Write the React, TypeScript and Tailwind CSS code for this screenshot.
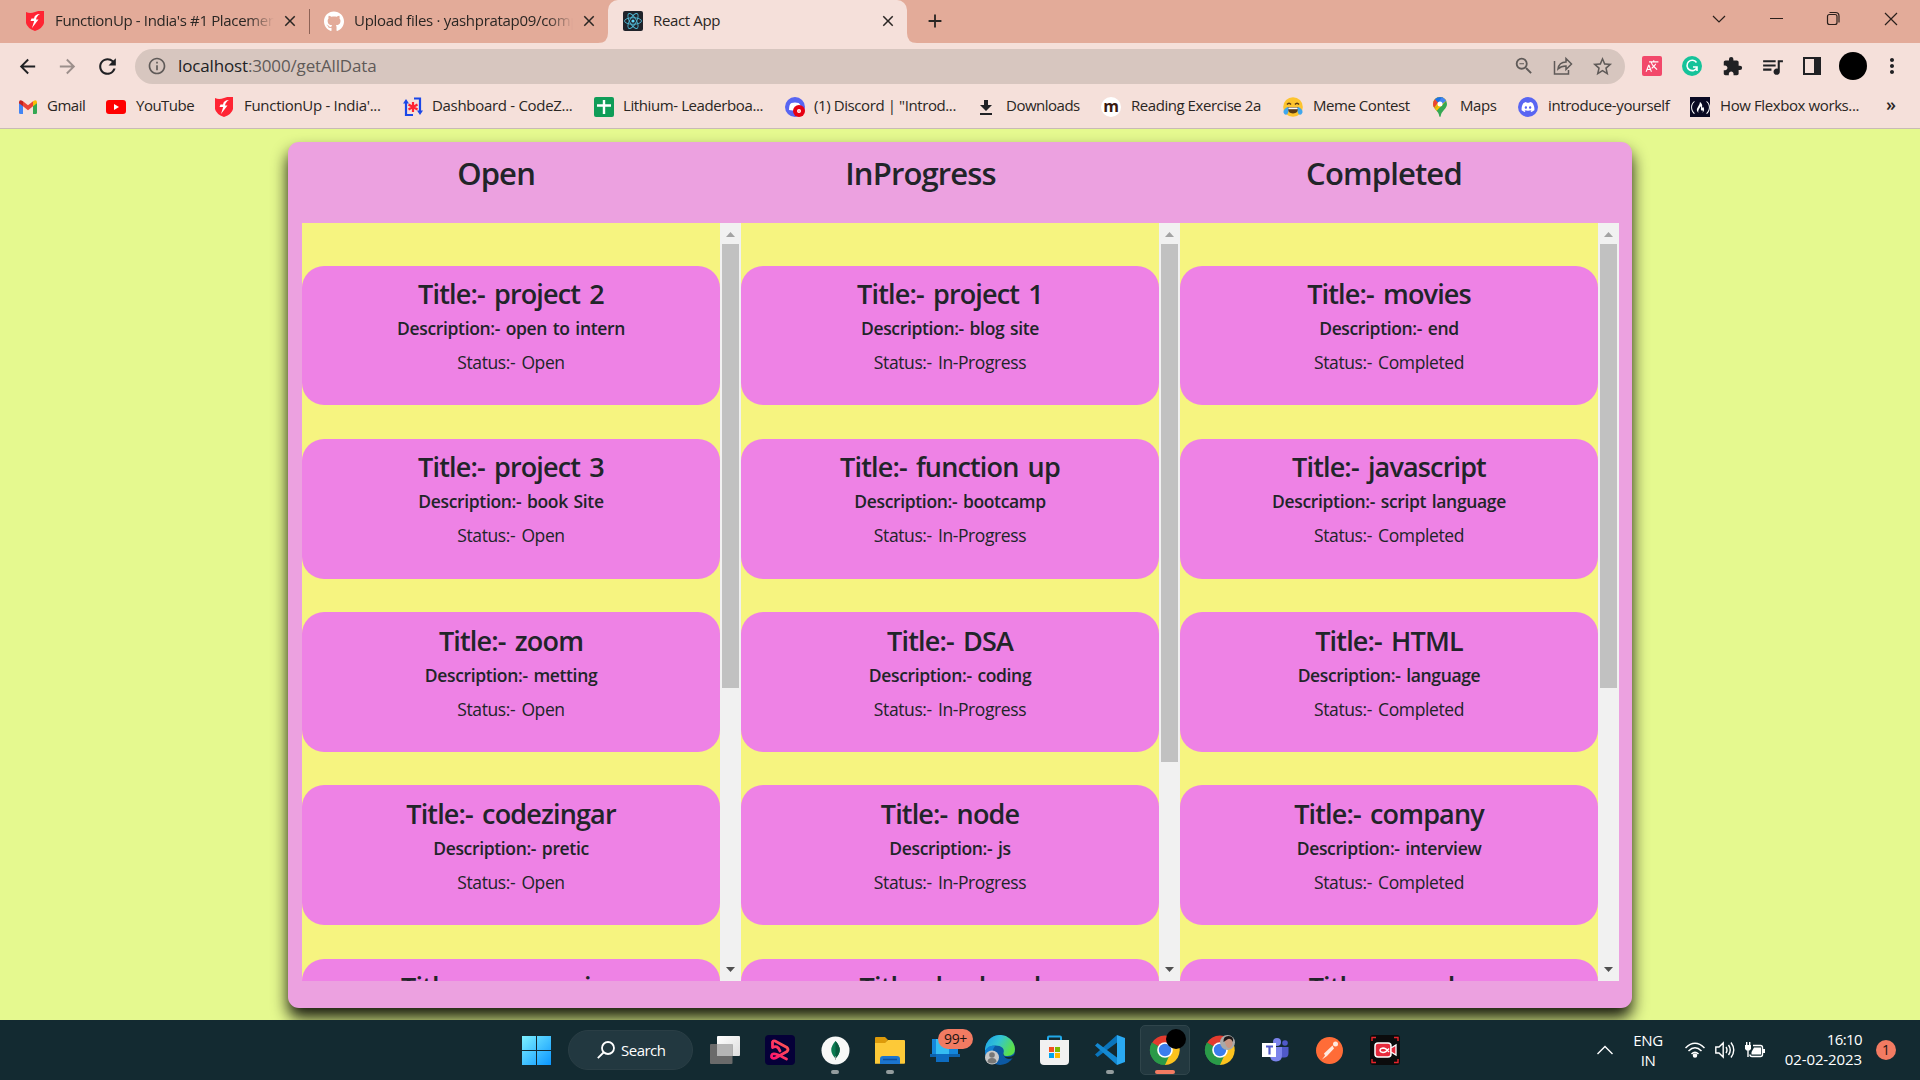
import React from "react";
import { FaGithub, FaDiscord, FaFreeCodeCamp } from "react-icons/fa";
import {
  MdArrowBack,
  MdArrowForward,
  MdRefresh,
  MdInfoOutline,
  MdZoomOut,
  MdStarBorder,
  MdExtension,
  MdQueueMusic,
  MdMoreVert,
  MdClose,
  MdAdd,
  MdTranslate,
} from "react-icons/md";

/* ---------- favicons ---------- */

const Shield = () => (
  <svg width="18" height="20" viewBox="0 0 18 20">
    <path d="M0 1q4 2 9 0q5-2 9-1v12q-1 5-9 8q-8-3-9-8z" fill="#ff2433" />
    <path d="M14 3Q8.500 3 8 7.500H5.500L4.500 10h3.700L6 17l6.500-8.500H10Q10.500 5 14 3z" fill="#fff" />
  </svg>
);
const ReactIcon = () => (
  <svg width="20" height="20" viewBox="0 0 20 20">
    <rect width="20" height="20" rx="2" fill="#20232a" />
    <g fill="none" stroke="#4fb7d3" strokeWidth="0.9">
      <ellipse cx="10" cy="10" rx="8.500" ry="3.300" />
      <ellipse cx="10" cy="10" rx="8.500" ry="3.300" transform="rotate(60 10 10)" />
      <ellipse cx="10" cy="10" rx="8.500" ry="3.300" transform="rotate(120 10 10)" />
    </g>
    <circle cx="10" cy="10" r="1.600" fill="#61dafb" />
  </svg>
);
const Gmail = () => (
  <svg width="18" height="14" viewBox="0 0 18 14">
    <path d="M0 2v10.500Q0 14 1.300 14H4V5z" fill="#4285f4" />
    <path d="M18 2v10.500Q18 14 16.700 14H14V5z" fill="#34a853" />
    <path d="M4 1.300 9 5.200l5-3.900v5L9 10.200 4 6.300z" fill="#ea4335" />
    <path d="M0 2.200Q.3-1.200 4 1.300v5L0 3.300z" fill="#c5221f" />
    <path d="M18 2.200Q17.700-1.200 14 1.300v5l4-3z" fill="#fbbc04" />
  </svg>
);
const YouTube = () => (
  <svg width="20" height="14" viewBox="0 0 20 14">
    <rect width="20" height="14" rx="3" fill="#f00" />
    <path d="M8 4v6l5-3z" fill="#fff" />
  </svg>
);
const CodeZ = () => (
  <svg width="20" height="20" viewBox="0 0 20 20" fill="none">
    <path d="M3 6v12h7M17 14V1.500h-6" stroke="#1a47e8" strokeWidth="2.200" />
    <path d="M0 6.500 3 2l3 4.500zM14 13.500l3 4.500 3-4.500z" fill="#1a47e8" />
    <path d="M10 5v10M5.500 7.500l9 5M14.500 7.500l-9 5" stroke="#ff2433" strokeWidth="2.200" />
  </svg>
);
const Sheets = () => (
  <svg width="20" height="20" viewBox="0 0 20 20">
    <rect width="20" height="20" rx="2" fill="#0f9d58" />
    <path d="M10 3v14M3 8.500h14" stroke="#fff" strokeWidth="2.400" />
  </svg>
);
const DiscordBadge = () => (
  <svg width="20" height="20" viewBox="0 0 20 20">
    <circle cx="10" cy="10" r="10" fill="#5865f2" />
    <path d="M4 13Q4 7 6.500 6q3.500-1 7 0 2 1 2.500 5l-5 3z" fill="#fff" />
    <circle cx="14" cy="14" r="6" fill="#e60012" />
    <circle cx="14" cy="14" r="1.300" fill="none" stroke="#fff" strokeWidth="1.400" />
  </svg>
);
const Download = () => (
  <svg width="12" height="15" viewBox="0 0 12 15" className="ml-[4px]">
    <path d="M4 0h4v5h4l-6 6-6-6h4zM0 13h12v2H0z" fill="#202124" />
  </svg>
);
const LetterM = () => (
  <span className="flex h-5 w-5 items-center justify-center rounded-full bg-white pb-[3px] text-[16px] leading-none font-bold text-[#3a1a10]">
    m
  </span>
);
const Joy = () => (
  <svg width="20" height="20" viewBox="0 0 20 20">
    <circle cx="10" cy="10" r="9.800" fill="#fdc42e" />
    <path d="M4 7.500q2-2.500 4 0M12 7.500q2-2.500 4 0" stroke="#5b3a12" strokeWidth="1.500" fill="none" />
    <path d="M4.500 10h11q0 6.500-5.500 6.500T4.500 10z" fill="#5b3a12" />
    <path d="M5.300 10.500h9.400v1.700H5.300z" fill="#fff" />
    <path d="M5 10q-5 2-4.500 5.500Q2 19 4.500 17 6 15 5 10zM15 10q5 2 4.500 5.500Q18 19 15.500 17 14 15 15 10z" fill="#3fa7ee" />
  </svg>
);
const MapsPin = () => (
  <svg width="14" height="20" viewBox="0 0 14 20" className="ml-[3px]">
    <defs>
      <clipPath id="pin">
        <path d="M7 0a7 7 0 0 1 7 7c0 5-6 7-6.300 12.300q-.7 1.400-1.400 0C6 14 0 12 0 7a7 7 0 0 1 7-7z" />
      </clipPath>
    </defs>
    <g clipPath="url(#pin)">
      <path d="M0 0h14v20H0z" fill="#34a853" />
      <path d="M0 13.500 14 0v3L2.500 15z" fill="#fbbc04" />
      <path d="M0 0h14L12 2.500 1 12 0 13z" fill="#fbbc04" />
      <path d="M0 0h12L5 6.500z" fill="#1a73e8" />
      <path d="M5 6 9 0h5v3L8 8z" fill="#4285f4" />
      <path d="M0 2h1.500L5 5.500 1 11H0z" fill="#ea4335" />
    </g>
    <circle cx="7" cy="7" r="2.500" fill="#fff" />
  </svg>
);
const Discord = () => (
  <span className="flex h-5 w-5 items-center justify-center rounded-full bg-[#5865f2] text-white">
    <FaDiscord size={14} />
  </span>
);
const Fcc = () => (
  <span className="flex h-5 w-5 items-center justify-center bg-[#0a0a23] text-white">
    <FaFreeCodeCamp size={19} />
  </span>
);

/* ---------- browser chrome ---------- */

function Tab({ icon, label, cls, text }: { icon: React.ReactNode; label: string; cls: string; text: string }) {
  return (
    <div className={`flex h-full items-center pb-px ${cls}`}>
      <span className="flex w-5 shrink-0 justify-center">{icon}</span>
      <span className={`ml-[10px] flex-1 overflow-hidden pb-[2px] whitespace-nowrap ${text}`}>{label}</span>
      <MdClose size={18} className="ml-[7px] shrink-0" />
    </div>
  );
}

const bookmarks = [
  { icon: <Gmail />, label: "Gmail", w: "w-[87px]", t: "ml-[10px] tracking-[-0.5px]" },
  { icon: <YouTube />, label: "YouTube", w: "w-[109px]", t: "ml-[10px] tracking-[-0.5px]" },
  { icon: <Shield />, label: "FunctionUp - India'...", w: "w-[188px]", t: "ml-[11px] tracking-[-0.3px]" },
  { icon: <CodeZ />, label: "Dashboard - CodeZ...", w: "w-[191px]", t: "ml-[9px] tracking-[-0.3px]" },
  { icon: <Sheets />, label: "Lithium- Leaderboa...", w: "w-[191px]", t: "ml-[9px] tracking-[-0.4px]" },
  { icon: <DiscordBadge />, label: '(1) Discord | "Introd...', w: "w-[191px]", t: "ml-[9px] tracking-[-0.4px]" },
  { icon: <Download />, label: "Downloads", w: "w-[125px]", t: "ml-[14px] tracking-[-0.5px]" },
  { icon: <LetterM />, label: "Reading Exercise 2a", w: "w-[182px]", t: "ml-[10px] tracking-[-0.45px]" },
  { icon: <Joy />, label: "Meme Contest", w: "w-[147px]", t: "ml-[10px] tracking-[-0.45px]" },
  { icon: <MapsPin />, label: "Maps", w: "w-[88px]", t: "ml-[13px] tracking-[-0.4px]" },
  { icon: <Discord />, label: "introduce-yourself", w: "w-[172px]", t: "ml-[10px] tracking-[-0.4px]" },
  { icon: <Fcc />, label: "How Flexbox works...", w: "w-[186px]", t: "ml-[10px] tracking-[-0.4px]" },
];

function Browser() {
  return (
    <header className="h-[129px] shrink-0 border-b border-[#c9bbb4] bg-[#f5e0da] text-[15px] text-[#2a2623]">
      <div className="flex h-[43px] bg-[#e3ab99]">
        <Tab icon={<Shield />} label="FunctionUp - India's #1 Placement" cls="w-[309px] pl-[25px] pr-[10px]" text="tracking-[-0.35px] [mask-image:linear-gradient(to_right,black_88%,transparent)]" />
        <div className="mt-[9px] h-[25px] w-px bg-[#8d6256]" />
        <Tab icon={<FaGithub size={21} className="text-white" />} label="Upload files · yashpratap09/compet" cls="w-[298px] pl-[14px] pr-[10px]" text="tracking-[-0.3px] [mask-image:linear-gradient(to_right,black_88%,transparent)]" />
        <div className="relative h-full w-[299px] rounded-t-[10px] bg-[#f5e0da]">
          <svg className="absolute bottom-0 left-[-10px]" width="10" height="10"><path d="M10 0v10H0Q10 10 10 0z" fill="#f5e0da" /></svg>
          <svg className="absolute right-[-10px] bottom-0" width="10" height="10"><path d="M0 0v10h10Q0 10 0 0z" fill="#f5e0da" /></svg>
          <Tab icon={<ReactIcon />} label="React App" cls="pl-[15px] pr-[10px]" text="tracking-[-0.35px]" />
        </div>
        <MdAdd size={22} className="mt-[10px] ml-[17px]" />
        <svg className="ml-auto" width="220" height="43" fill="none" stroke="#2a201c" strokeWidth="1.200">
          <path d="M13 16l6 6 6-6M70 18.500h13M185 13l12 12M197 13l-12 12" />
          <rect x="127.500" y="14.500" width="9.500" height="10" rx="2" />
          <path d="M129.500 12.500h6q3.500 0 3.500 3.500v6.500" />
        </svg>
      </div>
      <div className="flex h-[45px] items-center pt-px pl-[16px] text-[#202124]">
        <MdArrowBack size={23} />
        <MdArrowForward size={23} className="ml-[17px] text-[#9c8f8b]" />
        <MdRefresh size={25} className="ml-[16px]" />
        <div className="ml-[15px] flex h-[35px] w-[1490px] items-center rounded-full bg-[#d7c6bf] pl-[12px] text-[#5f5a58]">
          <MdInfoOutline size={20} />
          <span className="ml-[11px] pb-px text-[17px] tracking-[-0.15px]">
            <span className="text-[#202124]">localhost</span>:3000/getAllData
          </span>
          <MdZoomOut size={22} className="ml-auto" />
          <svg className="ml-[18px]" width="20" height="20" viewBox="0 0 20 20" fill="none" stroke="currentColor" strokeWidth="1.500">
            <path d="M1.500 5v13h14v-4M5 13q1-7 8-7V2.500L18.500 8 13 13.500V10q-5 0-8 3z" />
          </svg>
          <MdStarBorder size={23} className="mr-[11px] ml-[18px]" />
        </div>
        <span className="ml-[17px] flex h-5 w-5 items-center justify-center rounded-[2px] bg-[#f2486a] text-white">
          <MdTranslate size={14} className="-scale-x-100" />
        </span>
        <span className="ml-[20px] flex h-5 w-5 items-center justify-center rounded-full bg-[#15c39a]">
          <svg width="14" height="14" viewBox="0 0 14 14" fill="none" stroke="#fff" strokeWidth="1.600">
            <path d="M11.500 3.500A5.200 5.200 0 1 0 12 8.500M8 8h4v4" />
          </svg>
        </span>
        <MdExtension size={21} className="ml-[20px]" />
        <MdQueueMusic size={25} className="ml-[17px]" />
        <span className="ml-[18px] h-[18px] w-[18px] border-[2.500px] border-r-[7px] border-[#202124]" />
        <span className="ml-[18px] h-7 w-7 rounded-full bg-black" />
        <MdMoreVert size={24} className="ml-[13px]" />
      </div>
      <div className="flex h-[38px] items-center pl-[19px] text-[15px]">
        {bookmarks.map((b) => (
          <div key={b.label} className={`flex shrink-0 items-center whitespace-nowrap ${b.w}`}>
            {b.icon}
            <span className={`pb-[3px] ${b.t}`}>{b.label}</span>
          </div>
        ))}
        <span className="ml-[10px] pb-[5px] text-[18px] font-semibold">»</span>
      </div>
    </header>
  );
}

/* ---------- board ---------- */

const columns = [
  {
    status: "Open",
    thumb: "h-[444px]",
    items: [
      ["project 2", "open to intern"],
      ["project 3", "book Site"],
      ["zoom", "metting"],
      ["codezingar", "pretic"],
      ["programing", "language"],
    ],
  },
  {
    status: "In-Progress",
    thumb: "h-[518px]",
    items: [
      ["project 1", "blog site"],
      ["function up", "bootcamp"],
      ["DSA", "coding"],
      ["node", "js"],
      ["backend", "api"],
    ],
  },
  {
    status: "Completed",
    thumb: "h-[444px]",
    items: [
      ["movies", "end"],
      ["javascript", "script language"],
      ["HTML", "language"],
      ["company", "interview"],
      ["vscode", "editor"],
    ],
  },
];

function Scrollbar({ thumb }: { thumb: string }) {
  return (
    <div className="flex w-[21px] shrink-0 flex-col items-center bg-[#f1f1f1]">
      <div className="flex h-[21px] items-center pt-[2px]">
        <svg width="9" height="5"><path d="M0 5 4.500 0 9 5z" fill="#a3a3a3" /></svg>
      </div>
      <div className={`w-[17px] bg-[#c1c1c1] ${thumb}`} />
      <div className="mt-auto flex h-[21px] items-center pb-[2px]">
        <svg width="9" height="5"><path d="M0 0 4.500 5 9 0z" fill="#505050" /></svg>
      </div>
    </div>
  );
}

function Board() {
  return (
    <section className="mx-auto mt-[13px] h-[866px] w-[1344px] rounded-[11px] bg-[#eca1e0] pl-[14px] text-[#212529] shadow-[0_10px_16px_rgba(0,0,0,0.9)]">
      <div className="flex h-[81px] w-[1315px] justify-around pt-[7px] text-[31px] leading-[48px] font-semibold tracking-[-0.85px]">
        <h2>Open</h2>
        <h2>InProgress</h2>
        <h2>Completed</h2>
      </div>
      <div className="flex h-[758px] w-[1317px]">
        {columns.map((c) => (
          <div key={c.status} className="flex w-[439px] overflow-hidden bg-[#f6f480]">
            <div className="flex w-[418px] flex-col gap-[33.750px] pt-[43px] text-center">
              {c.items.map(([title, desc]) => (
                <article key={title} className="h-[139.400px] shrink-0 rounded-[22px] bg-[#ee82e5] pt-[9.300px]">
                  <h3 className="text-[27px] leading-[38px] font-semibold tracking-[-0.85px] [word-spacing:3px]">Title:- {title}</h3>
                  <h6 className="text-[17.500px] leading-[30px] font-semibold tracking-[-0.35px] [word-spacing:1.500px]">Description:- {desc}</h6>
                  <p className="mt-[4px] text-[17.500px] leading-[30px] tracking-[-0.4px] [word-spacing:2px]">Status:- {c.status}</p>
                </article>
              ))}
            </div>
            <Scrollbar thumb={c.thumb} />
          </div>
        ))}
      </div>
    </section>
  );
}

/* ---------- taskbar ---------- */

const Chrome = ({ badge }: { badge: React.ReactNode }) => (
  <svg width="38" height="36" viewBox="0 0 38 36" className="overflow-visible">
    <path d="M15 18 2 11A15 15 0 0 1 28 11z" fill="#e33b2e" />
    <path d="M15 18 28 11A15 15 0 0 1 15 33z" fill="#fcc31e" />
    <path d="M15 18v15A15 15 0 0 1 2 10.500z" fill="#2a9a48" />
    <path d="M20 22 15 33A15 15 0 0 1 2 10.500L9 21z" fill="#2a9a48" />
    <circle cx="15" cy="18" r="7.800" fill="#fff" />
    <circle cx="15" cy="18" r="6.200" fill="#3b7ded" />
    {badge}
  </svg>
);

function Slot({ children, run }: { children: React.ReactNode; run?: boolean }) {
  return (
    <div className="relative flex h-[50px] w-[50px] items-center justify-center">
      {children}
      {run && <span className="absolute bottom-[1px] h-[4px] w-[8px] rounded-full bg-[#939c9e]" />}
    </div>
  );
}

function Taskbar() {
  return (
    <footer className="relative z-10 flex h-[60px] shrink-0 items-center bg-[#132a31] text-white">
      <div className="ml-[511px] flex items-center gap-[5px]">
        <Slot>
          <svg width="29" height="29" viewBox="0 0 29 29">
            <defs>
              <linearGradient id="win" x1="0" y1="0" x2="29" y2="29" gradientUnits="userSpaceOnUse">
                <stop stopColor="#7df0ff" />
                <stop offset="1" stopColor="#0a96ff" />
              </linearGradient>
            </defs>
            <path d="M0 0h14v14H0zM15 0h14v14H15zM0 15h14v14H0zM15 15h14v14H15z" fill="url(#win)" />
          </svg>
        </Slot>
        <div className="mr-[2px] ml-[2px] flex h-10 w-[125px] items-center rounded-full border border-[#2a3e45] bg-[#223840] pl-[28px]">
          <svg width="18" height="18" viewBox="0 0 18 18" fill="none" stroke="#fff" strokeWidth="1.800">
            <circle cx="11" cy="7" r="6" />
            <path d="M6.500 11.500.8 17.200" />
          </svg>
          <span className="ml-[6px] text-[15px] tracking-[-0.5px]">Search</span>
        </div>
        <Slot>
          <svg width="30" height="28">
            <defs><linearGradient id="tv" x2="1" y2="1"><stop stopColor="#fff" /><stop offset="1" stopColor="#ddd" /></linearGradient></defs>
            <rect x="7" width="23" height="20" rx="1" fill="url(#tv)" />
            <rect y="8" width="22.500" height="20" rx="1" fill="#6a6a6a" />
            <path d="M7 8h15.500v12H7z" fill="#b5b5b5" />
          </svg>
        </Slot>
        <Slot>
          <svg width="30" height="30" viewBox="0 0 30 30" fill="none">
            <defs><linearGradient id="loop" x1="1" y1="0" x2="0" y2="1"><stop stopColor="#ff5f50" /><stop offset="1" stopColor="#ff1070" /></linearGradient></defs>
            <rect width="30" height="30" rx="4" fill="#050038" />
            <path d="M7.500 12.500V7Q8 5.500 10 6l12 6.500q2 2 0 4L13 21.500q-5 3.500-6.500.500-.5-4 4-3L15 20.500q2 1.500 6.500 3.500M7.500 12.500q5-3 7.500 3.500" stroke="url(#loop)" strokeWidth="2.800" strokeLinejoin="round" strokeLinecap="round" />
          </svg>
        </Slot>
        <Slot run>
          <svg width="29" height="29" viewBox="0 0 29 29">
            <circle cx="14.500" cy="14.500" r="14" fill="#f7f8f7" />
            <path d="M14.500 5q-8.500 9 0 17.500 8.500-8.500 0-17.500z" fill="#0a7a50" />
            <path d="M14.500 5q8.500 9 0 17.500z" fill="#08593d" />
            <path d="M14.200 20h.8v4h-.8z" fill="#999" />
          </svg>
        </Slot>
        <Slot run>
          <svg width="30" height="27" viewBox="0 0 30 27">
            <path d="M0 1q0-1 1-1h9l3 3-3 4H0z" fill="#dd9a0a" />
            <path d="M0 6h10l3-3h16q1 0 1 1v22q0 .8-1 .8H0z" fill="#fdc938" />
            <path d="M5 27v-5q0-3 3-3h14q3 0 3 3v5z" fill="#1b75cf" />
            <path d="M8 22.500h14" stroke="#0d4e9b" strokeWidth="1.500" />
          </svg>
        </Slot>
        <Slot>
          <svg width="30" height="30" viewBox="0 0 30 30">
            <path d="M2 4h26v15H2z" fill="#1487dc" />
            <path d="M6 4h13v21H6z" fill="#35bdf2" />
            <path d="M0 19h30v3H0z" fill="#0d62ac" />
            <path d="M6 19h13v8H6z" fill="#0d6cc0" />
          </svg>
          <span className="absolute top-[4px] right-[-3px] flex h-5 w-[35px] items-center justify-center rounded-full bg-[#f27b62] pb-px text-[14px] leading-none tracking-[-0.3px] text-[#1c1412]">99+</span>
        </Slot>
        <Slot>
          <svg width="30" height="30" viewBox="0 0 30 30">
            <defs>
              <linearGradient id="edge" x2="1" y2=".4"><stop stopColor="#1b9fe8" /><stop offset=".5" stopColor="#33c4d4" /><stop offset="1" stopColor="#5be04a" /></linearGradient>
            </defs>
            <circle cx="15" cy="15" r="15" fill="#0c59a4" />
            <path d="M0 16A15 15 0 0 1 30 14q0 7-7.500 7-5 0-4-3 1.500-5-4-7Q5 9 0 16z" fill="url(#edge)" />
            <path d="M0 16q3-6 10-5-4 5-1 12l-5 3Q0 22 0 16z" fill="#1280d2" />
            <path d="M18.500 18q-1 4 4 4 4 0 7.500-2.500v2q-1 1.500-3 2-8 2-8.500-5.500z" fill="#132a31" />
            <circle cx="7" cy="22.500" r="7" fill="#c8c8c8" />
            <circle cx="7" cy="20" r="2.800" fill="#777" />
            <path d="M2.500 27q0-4 4.500-4t4.500 4q-4.500 3-9 0z" fill="#777" />
          </svg>
        </Slot>
        <Slot>
          <svg width="29" height="30" viewBox="0 0 29 30" className="mr-[2px]">
            <path d="M8 6V2.500Q8 1.500 9 1.500h11q1 0 1 1V6" fill="none" stroke="#21a8e8" strokeWidth="2" />
            <path d="M0 5h29v21q0 4-4 4H4q-4 0-4-4z" fill="#f1f1f1" />
            <path d="M9 12h5v5H9z" fill="#f25022" /><path d="M15 12h5v5h-5z" fill="#7fba00" />
            <path d="M9 18h5v5H9z" fill="#00a4ef" /><path d="M15 18h5v5h-5z" fill="#ffb900" />
          </svg>
        </Slot>
        <Slot run>
          <svg width="30" height="30" viewBox="0 0 30 30">
            <path d="M0 19.500 2.500 22 22 7.500V0z" fill="#0a75bd" />
            <path d="M0 10.500 2.500 8 22 22.500V30z" fill="#1489d2" />
            <path d="M22 0l8 3v24l-8 3z" fill="#2aa9f2" />
          </svg>
        </Slot>
        <div className="relative flex h-[50px] w-[50px] items-center justify-center rounded-[5px] border border-[#30454b] bg-[#22383f] pl-[7px]">
          <Chrome badge={<circle cx="26" cy="7" r="10" fill="#000" />} />
          <span className="absolute bottom-0 left-[14px] h-[4px] w-[20px] rounded-full bg-[#f27b62]" />
        </div>
        <Slot>
          <span className="pl-[8px]">
            <Chrome
              badge={
                <g>
                  <circle cx="22.500" cy="10.500" r="7.500" fill="#a9a9a9" />
                  <path d="M19.500 9q0-4 4-4t4 4v3q-1 4-3.500 4t-3.500-4z" fill="#c99683" />
                  <path d="M18.500 10q-.5-6 5-6t4.500 6q-2-4-5-3z" fill="#1c1718" />
                </g>
              }
            />
          </span>
        </Slot>
        <Slot>
          <svg width="27" height="24" viewBox="0 0 27 24">
            <circle cx="15" cy="4" r="4" fill="#7b83eb" />
            <circle cx="23" cy="5" r="2.800" fill="#5059c9" />
            <path d="M17 9h9.500v6q0 4.500-4 4.500H17z" fill="#5059c9" />
            <path d="M8 9h12v8q0 6.500-6 6.500T8 17z" fill="#7b83eb" />
            <path d="M0 5h14v14H0z" fill="#fff" />
            <path d="M4 8.500h7M7.500 8.500v8" stroke="#5059c9" strokeWidth="2.200" />
          </svg>
        </Slot>
        <Slot>
          <svg width="27" height="27" viewBox="0 0 27 27" className="mr-[2px]">
            <circle cx="13.500" cy="13.500" r="13.500" fill="#ff6c37" />
            <circle cx="19.500" cy="7" r="2.500" fill="#ffe9df" />
            <path d="M16.500 8.500 8 16.500l1 2-3 4 5-3.500 7-7.500z" fill="#ffe9df" />
          </svg>
        </Slot>
        <Slot>
          <svg width="30" height="30" viewBox="0 0 30 30" fill="none">
            <rect width="30" height="30" rx="3" fill="#0b0b0c" />
            <path d="M2 6V2.500h4M24 2.500h4V6M2 24v3.500h4M24 27.500h4V24" stroke="#e8232b" strokeWidth="1.400" />
            <rect x="5" y="8" width="16" height="14" rx="3" fill="#e62a3c" stroke="#fff" strokeWidth="1.500" />
            <path d="M21 13l5-3v10l-5-3z" fill="#e62a3c" stroke="#fff" strokeWidth="1.300" />
            <path d="M19 17q-3-4-6-4-3 .5-3 2.300t3 2.200q3 0 6-4" stroke="#fff" strokeWidth="1.400" />
          </svg>
        </Slot>
      </div>
      <svg className="ml-auto" width="16" height="10" fill="none" stroke="#fff" strokeWidth="1.400"><path d="M.5 9 8 1.500 15.500 9" /></svg>
      <div className="ml-[20px] w-[30px] text-center text-[15px] leading-[20px] tracking-[-0.4px]">ENG<br />IN</div>
      <svg className="ml-[22px]" width="20" height="16" viewBox="0 0 20 16" fill="none" stroke="#fff" strokeWidth="1.500">
        <path d="M.5 6Q10-3.500 19.500 6M3.500 9Q10 2.500 16.500 9M6.500 12q3.500-3.500 7 0" />
        <circle cx="10" cy="13.500" r="1.500" fill="#fff" />
      </svg>
      <svg className="ml-[10px]" width="20" height="18" viewBox="0 0 20 18" fill="none" stroke="#fff" strokeWidth="1.400">
        <path d="M.8 6v6H4l4.200 4V2L4 6zM11 6q2 3 0 6M13.500 4q3.500 5 0 10M16 1.500q5.500 7.500 0 15" />
      </svg>
      <svg className="ml-[10px]" width="20" height="16" viewBox="0 0 20 16" fill="none" stroke="#fff" strokeWidth="1.400">
        <path d="M8 3.500h7.500q2 0 2 2v7q0 2-2 2H7q-2 0-2-2M3 8v7" />
        <path d="M9 5.500h7v7H6.500V10zM18 7h2v4h-2zM0 3h6v4L4.500 8.500h-3L0 7zM1 0h1.400v3H1zM4 0h1.400v3H4z" fill="#fff" stroke="none" />
      </svg>
      <div className="ml-[13px] w-[84px] pb-[2px] text-right text-[15px] leading-[20px] tracking-[-0.1px]">
        <span className="tracking-[-0.6px]">16:10</span><br />02-02-2023
      </div>
      <span className="mr-[24px] ml-[14px] flex h-5 w-5 items-center justify-center rounded-full bg-[#f27b62] text-[14px] leading-none text-[#1c1412]">1</span>
    </footer>
  );
}

export default function App() {
  return (
    <div className="flex h-[1080px] w-[1920px] flex-col overflow-hidden bg-[#e5f98f] font-['Open_Sans','Noto_Sans',sans-serif]">
      <Browser />
      <main className="min-h-0 flex-1">
        <Board />
      </main>
      <Taskbar />
    </div>
  );
}
